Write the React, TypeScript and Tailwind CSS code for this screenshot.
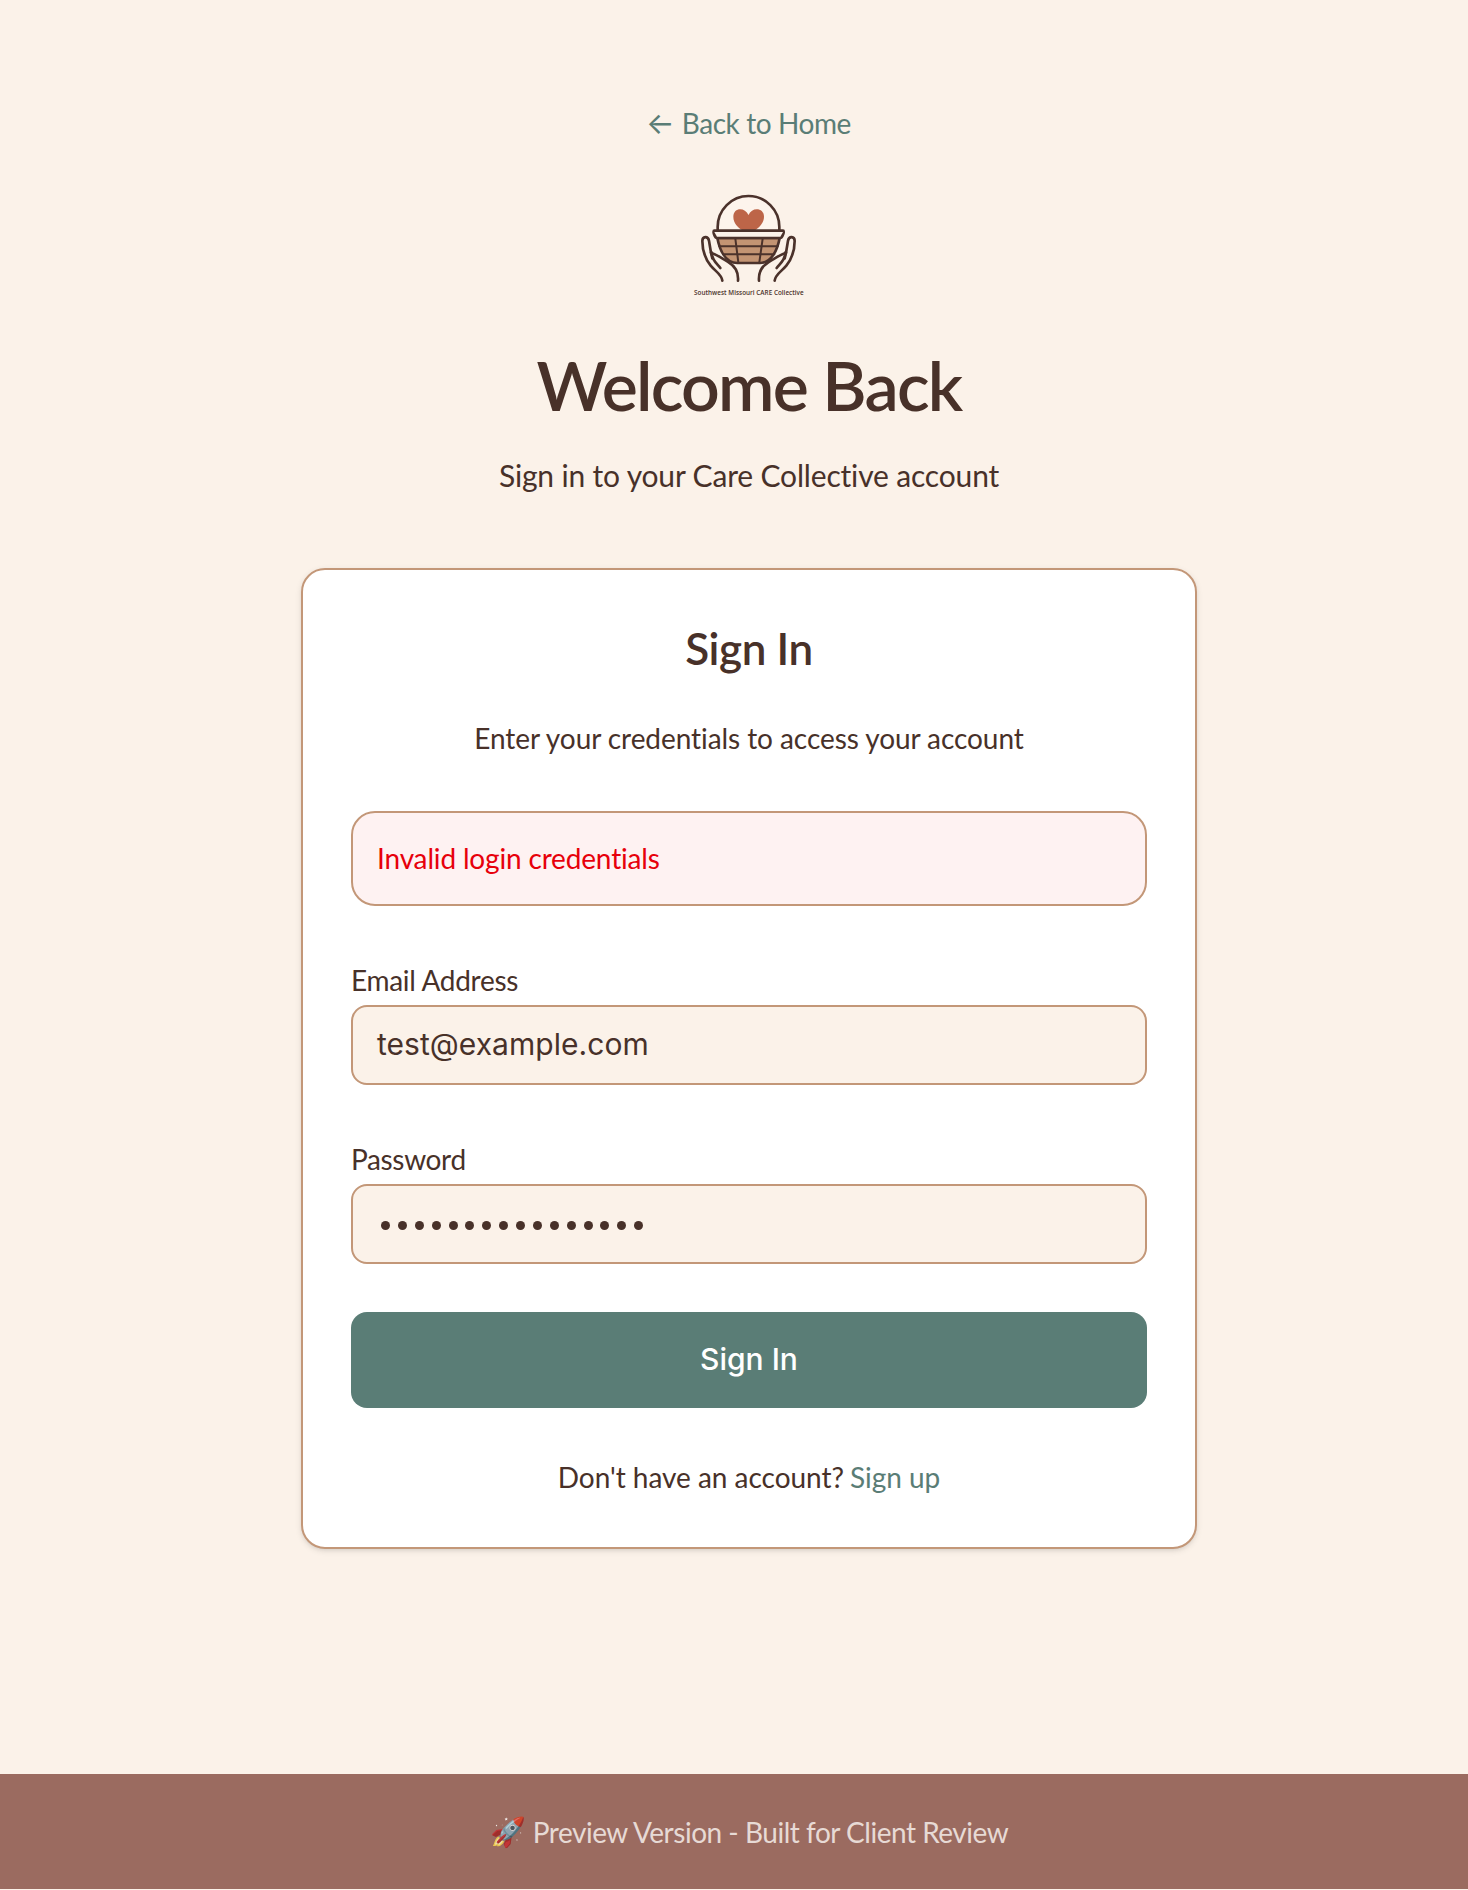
function Hand() {
  return (
    <g>
      <path d="M127 302 C125 283 106 274 92 257 C73 233 67 205 67 183 C67 168 84 167 87 182 L93 218" />
      <path d="M97 235 L93 218 C111 224 127 236 146 247 C166 259 176 276 174 302" />
      <path d="M95 218 C95 240 110 250 121 264" />
    </g>
  );
}

function Logo() {
  return (
    <svg
      viewBox="15 0 384 384"
      className="mt-[33px] h-32 w-32"
      fill="none"
      stroke="#4b322b"
      strokeWidth="8"
      strokeLinecap="round"
      strokeLinejoin="round"
      role="img"
      aria-label="Southwest Missouri CARE Collective"
    >
      <path d="M113 150 V141 A92.5 93 0 0 1 298 141 V150" fill="#fdf4ec" />
      <path
        d="M205.500 105 C194 80 160 83 160 110 C160 130 174 142 187 151 H225 C239 141 252 128 252 110 C252 83 216 80 205.500 105 Z"
        fill="#bd6548"
        stroke="none"
      />
      <path d="M112 174 C118 205 134 249 172 249 H240 C277 249 293 205 299 174 Z" fill="#c39473" />
      <path d="M118 199 H293 M129 223 H283 M166 176 L175 247 M248 176 L238 247" strokeWidth="6" />
      <path d="M103 152 H309 C315 152 307 174 301 174 H111 C104 174 97 152 103 152 Z" fill="#fbf2e9" />
      <Hand />
      <g transform="matrix(-1 0 0 1 411 0)">
        <Hand />
      </g>
      <text
        x="42"
        y="344"
        textLength="329"
        fontSize="19"
        fill="#4b322b"
        stroke="none"
        className="font-['Open_Sans',sans-serif] font-semibold"
      >
        Southwest Missouri CARE Collective
      </text>
    </svg>
  );
}

export default function App() {
  return (
    <div className="min-h-[1890px] w-full overflow-hidden bg-[#fbf2e9] font-['Lato',sans-serif] text-[28px] leading-[48px] text-[#483129]">
      <main className="flex flex-col items-center pt-[99px] pl-[30px]">
        <a className="flex whitespace-pre text-[#5a7d76]">
          <span className="-ml-px mr-[7px] font-['Inter',sans-serif] text-[30px]">←</span>
          <span className="tracking-[-0.42px]">Back to Home</span>
        </a>
        <Logo />
        <h1 className="mt-[37px] text-[68px] leading-[80px] font-semibold tracking-[-1.75px]">Welcome Back</h1>
        <p className="mt-[26px] text-[30px] tracking-[-0.17px]">Sign in to your Care Collective account</p>

        <section className="mt-[69px] flex h-[981px] w-[896px] flex-col rounded-3xl border-2 border-[#c39778] bg-white px-12 pt-[50px] shadow-[0_2px_6px_rgba(0,0,0,0.1),0_2px_4px_-2px_rgba(0,0,0,0.1)]">
          <h2 className="text-center text-[44px] leading-[56px] font-semibold tracking-[-0.4px]">Sign In</h2>
          <p className="mt-[38px] text-center tracking-[-0.07px]">Enter your credentials to access your account</p>

          <div className="mt-[49px] flex h-[95px] items-center rounded-3xl border-2 border-[#c39778] bg-[#fef2f2] px-6 pb-[2px] tracking-[-0.16px] text-[#e7000b]">
            Invalid login credentials
          </div>

          <label className="mt-[50px] tracking-[-0.3px]">Email Address</label>
          <div className="mt-px flex h-20 items-center rounded-2xl border-2 border-[#c39778] bg-[#fbf2e9] px-6 pb-[2px] font-['Inter',sans-serif] text-[30px] tracking-[0.04px]">
            test@example.com
          </div>

          <label className="mt-[50px] tracking-[-0.35px]">Password</label>
          <div className="mt-px flex h-20 items-center gap-[7.88px] rounded-2xl border-2 border-[#c39778] bg-[#fbf2e9] pt-[2px] pl-7">
            {Array.from({ length: 16 }, (_, i) => (
              <span key={i} className="size-[9px] rounded-full bg-[#483129]" />
            ))}
          </div>

          <button className="mt-12 h-24 shrink-0 rounded-2xl bg-[#5a7d76] pb-[2px] font-['Inter',sans-serif] text-[30px] font-medium text-white">
            Sign In
          </button>

          <p className="mt-[45px] text-center tracking-[-0.03px]">
            Don't have an account?<a className="ml-[6px] text-[#5a7d76]">Sign up</a>
          </p>
        </section>
      </main>

      <footer className="mt-[225px] flex h-[115px] items-center justify-center bg-[#9b6b60] pl-[30px] text-[#e7dad5]">
        <span className="mr-[7px] pb-[2px] text-[28.8px] opacity-85">🚀</span>
        <span className="tracking-[-0.48px]">Preview Version - Built for Client Review</span>
      </footer>
    </div>
  );
}
